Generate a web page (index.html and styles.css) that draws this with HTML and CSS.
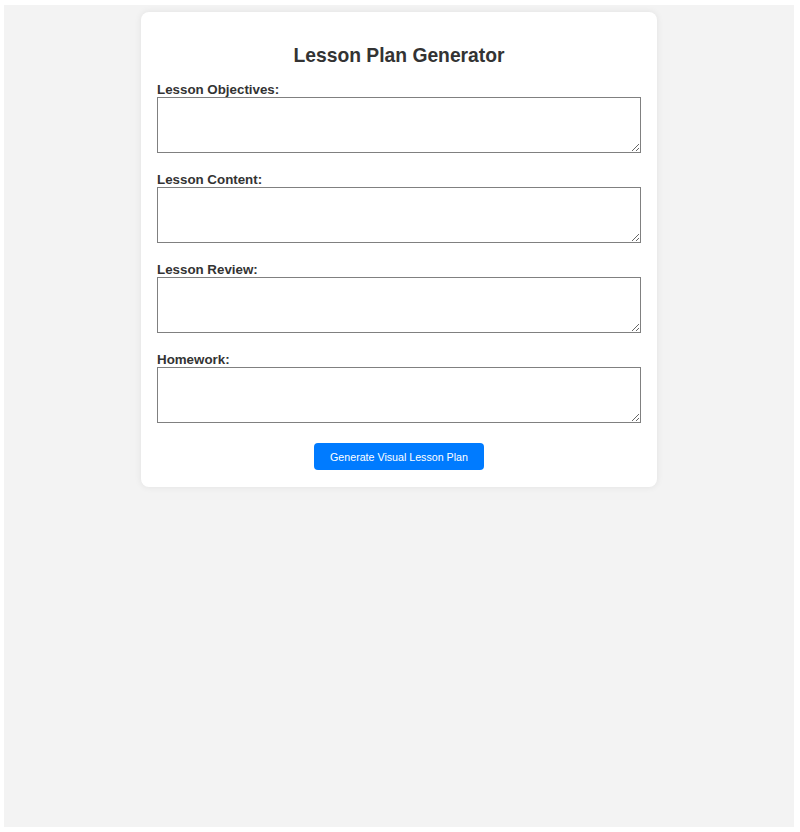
FILE: index.html
```html
<!DOCTYPE html>
<html>
<head>
<meta charset="utf-8">
<title>Lesson Plan Generator</title>
<link rel="stylesheet" href="styles.css">
</head>
<body>
<div class="card">
  <h1 class="title">Lesson Plan Generator</h1>
  <div class="field">
    <label class="label" for="objectives">Lesson Objectives:</label>
    <textarea class="input" id="objectives"></textarea>
  </div>
  <div class="field">
    <label class="label" for="content">Lesson Content:</label>
    <textarea class="input" id="content"></textarea>
  </div>
  <div class="field">
    <label class="label" for="review">Lesson Review:</label>
    <textarea class="input" id="review"></textarea>
  </div>
  <div class="field">
    <label class="label" for="homework">Homework:</label>
    <textarea class="input" id="homework"></textarea>
  </div>
  <div class="actions">
    <button class="button" type="button">Generate Visual Lesson Plan</button>
  </div>
</div>
</body>
</html>
```

FILE: styles.css
```css
html {
  background: #ffffff;
}
body {
  margin: 5px 6px 5px 4px;
  min-height: calc(100vh - 10px);
  box-sizing: border-box;
  padding-top: 7px;
  background: #f3f3f3;
  font-family: "Liberation Sans", Arial, sans-serif;
  color: #333333;
}
.card {
  width: 516px;
  box-sizing: border-box;
  margin: 0 auto;
  padding: 16px 16px 17px;
  background: #ffffff;
  border-radius: 8px;
  box-shadow: 0 0 7px rgba(0, 0, 0, 0.08);
}
.title {
  margin: 17px 0 15px;
  font-size: 19.3px;
  line-height: 22px;
  text-align: center;
  font-weight: bold;
  color: #333333;
}
.field {
  margin-bottom: 19px;
}
.label {
  display: block;
  font-size: 13.33px;
  line-height: 15px;
  font-weight: bold;
  color: #333333;
}
.input {
  display: block;
  width: 100%;
  height: 56px;
  box-sizing: border-box;
  margin: 0;
  border: 1px solid #808080;
  border-radius: 0;
  font-family: "Liberation Sans", Arial, sans-serif;
}
.actions {
  display: flex;
  justify-content: center;
  padding-top: 1px;
}
.button {
  height: 27px;
  padding: 0 16px;
  border: none;
  border-radius: 4px;
  background: #007bff;
  color: #ffffff;
  font-family: "Liberation Sans", Arial, sans-serif;
  font-size: 10.67px;
}
```
